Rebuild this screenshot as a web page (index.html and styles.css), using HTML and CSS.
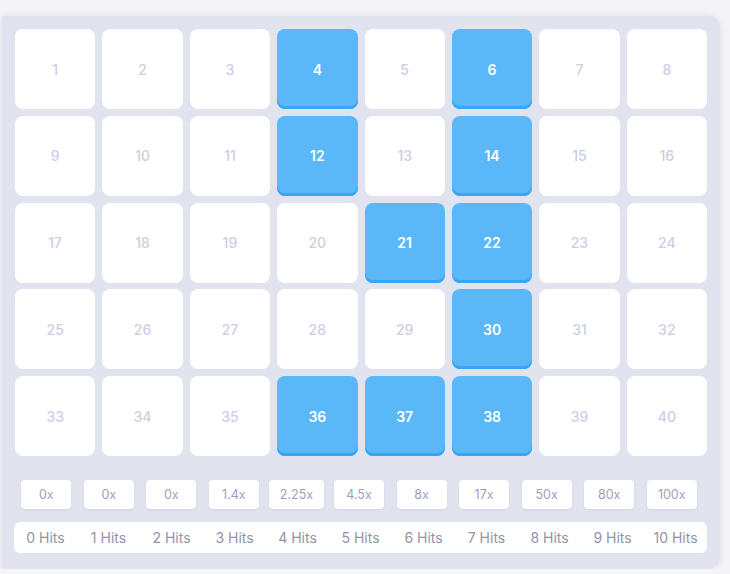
FILE: index.html
```html
<!DOCTYPE html>
<html lang="en">
<head>
  <meta charset="UTF-8">
  <meta name="viewport" content="width=device-width, initial-scale=1.0">
  <title>Keno</title>
  <link rel="stylesheet" href="styles.css">
</head>
<body>
<!-- Board -->
<section class="board">
  <div class="tiles">
    <div class="tile">1</div>
    <div class="tile">2</div>
    <div class="tile">3</div>
    <div class="tile picked">4</div>
    <div class="tile">5</div>
    <div class="tile picked">6</div>
    <div class="tile">7</div>
    <div class="tile">8</div>
    <div class="tile">9</div>
    <div class="tile">10</div>
    <div class="tile">11</div>
    <div class="tile picked">12</div>
    <div class="tile">13</div>
    <div class="tile picked">14</div>
    <div class="tile">15</div>
    <div class="tile">16</div>
    <div class="tile">17</div>
    <div class="tile">18</div>
    <div class="tile">19</div>
    <div class="tile">20</div>
    <div class="tile picked">21</div>
    <div class="tile picked">22</div>
    <div class="tile">23</div>
    <div class="tile">24</div>
    <div class="tile">25</div>
    <div class="tile">26</div>
    <div class="tile">27</div>
    <div class="tile">28</div>
    <div class="tile">29</div>
    <div class="tile picked">30</div>
    <div class="tile">31</div>
    <div class="tile">32</div>
    <div class="tile">33</div>
    <div class="tile">34</div>
    <div class="tile">35</div>
    <div class="tile picked">36</div>
    <div class="tile picked">37</div>
    <div class="tile picked">38</div>
    <div class="tile">39</div>
    <div class="tile">40</div>
  </div>

  <!-- Payout table -->
  <div class="payouts">
    <div class="payout"><span>0x</span></div>
    <div class="payout"><span>0x</span></div>
    <div class="payout"><span>0x</span></div>
    <div class="payout"><span>1.4x</span></div>
    <div class="payout"><span>2.25x</span></div>
    <div class="payout"><span>4.5x</span></div>
    <div class="payout"><span>8x</span></div>
    <div class="payout"><span>17x</span></div>
    <div class="payout"><span>50x</span></div>
    <div class="payout"><span>80x</span></div>
    <div class="payout"><span>100x</span></div>
  </div>

  <div class="hits">
    <div>0 Hits</div>
    <div>1 Hits</div>
    <div>2 Hits</div>
    <div>3 Hits</div>
    <div>4 Hits</div>
    <div>5 Hits</div>
    <div>6 Hits</div>
    <div>7 Hits</div>
    <div>8 Hits</div>
    <div>9 Hits</div>
    <div>10 Hits</div>
  </div>
</section>
</body>
</html>
```

FILE: styles.css
```css
body {
  background-color: #f5f5f7;
  font-family: Inter, "Open Sans", Arial, sans-serif;
  margin: 0;
  padding: 16px 0 0 2px;
}

.board {
  width: 718px;
  height: 553px;
  box-sizing: border-box;
  padding: 13px 13px 0 13px;
  background-color: #e1e3ef;
  border-radius: 0 12px 12px 0;
  box-shadow: 0 0 10px rgba(60, 60, 100, 0.12);
}

.tiles {
  display: grid;
  grid-template-columns: repeat(8, 1fr);
  grid-auto-rows: 80px;
  column-gap: 7px;
  row-gap: 6.75px;
}

.tile {
  background-color: #ffffff;
  border-radius: 8px;
  display: flex;
  align-items: center;
  justify-content: center;
  color: #cbcfe2;
  font-size: 14px;
  font-weight: 500;
}

.tile.picked {
  background-color: #5bb8f8;
  color: #ffffff;
  font-weight: 600;
  box-shadow: inset 0 -3px 0 #3aa5f3;
}

.payouts {
  display: grid;
  grid-template-columns: repeat(11, 1fr);
  margin: 24px 4px 0 0;
  height: 29px;
}

.payout {
  display: flex;
  justify-content: center;
}

.payout span {
  min-width: 50px;
  box-sizing: border-box;
  padding: 0 11px;
  height: 29px;
  line-height: 29px;
  text-align: center;
  background-color: #ffffff;
  border-radius: 4px;
  box-shadow: 0 1px 2px rgba(90, 95, 140, 0.12);
  color: #9ea1b4;
  font-size: 12.5px;
}

.hits {
  display: grid;
  grid-template-columns: repeat(11, 1fr);
  margin: 13px 0 0 -1px;
  height: 31px;
  align-items: center;
  background-color: #ffffff;
  border-radius: 6px;
  color: #9195a8;
  font-size: 14px;
  text-align: center;
}
```
